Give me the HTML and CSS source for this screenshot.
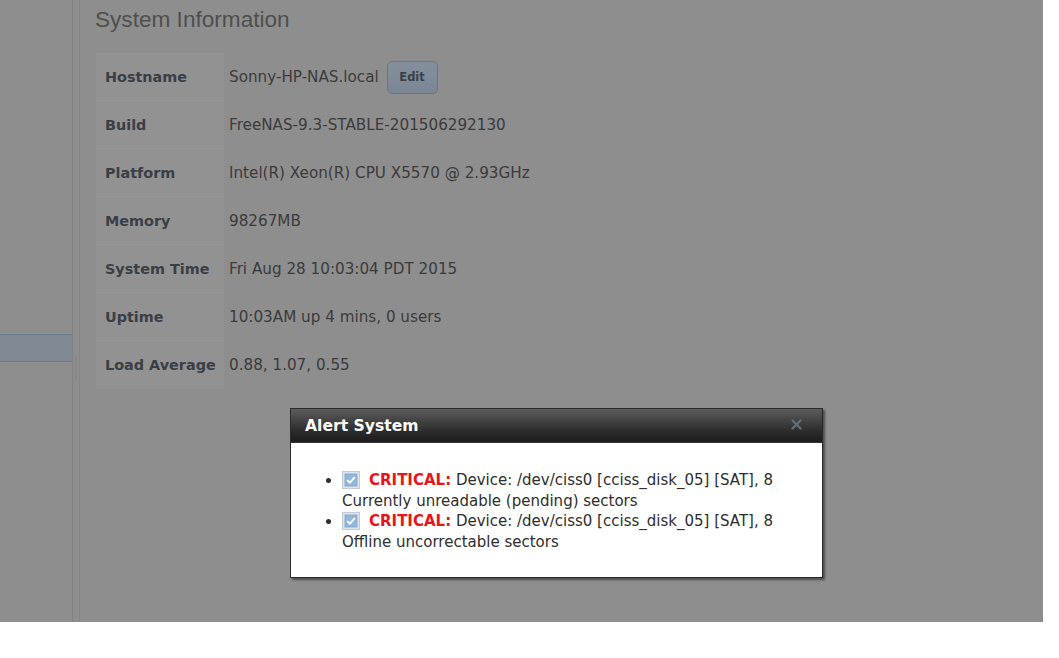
FILE: index.html
```html
<!DOCTYPE html>
<html>
<head>
<meta charset="utf-8">
<title>FreeNAS - System Information</title>
<link rel="stylesheet" href="styles.css">
</head>
<body>
<div class="screen">
  <aside class="sidebar">
    <div class="nav-selected"></div>
  </aside>
  <div class="splitter"><div class="grip"></div></div>
  <main class="main">
    <h1 class="title">System Information</h1>
    <table class="info">
      <tr><th>Hostname</th><td>Sonny-HP-NAS.local <button class="edit">Edit</button></td></tr>
      <tr><th>Build</th><td>FreeNAS-9.3-STABLE-201506292130</td></tr>
      <tr><th>Platform</th><td>Intel(R) Xeon(R) CPU X5570 @ 2.93GHz</td></tr>
      <tr><th>Memory</th><td>98267MB</td></tr>
      <tr><th>System Time</th><td>Fri Aug 28 10:03:04 PDT 2015</td></tr>
      <tr><th>Uptime</th><td>10:03AM up 4 mins, 0 users</td></tr>
      <tr><th>Load Average</th><td>0.88, 1.07, 0.55</td></tr>
    </table>
  </main>
  <div class="dialog">
    <div class="dialog-title">
      <span>Alert System</span>
      <svg class="close" width="11" height="11" viewBox="0 0 11 11"><path d="M1.5 1.5 L9.5 9.5 M9.5 1.5 L1.5 9.5" stroke="#5f6e7d" stroke-width="2.4" stroke-linecap="round"/></svg>
    </div>
    <div class="dialog-body">
      <ul class="alerts">
        <li><svg class="chk" width="18" height="18" viewBox="0 0 18 18"><rect x="0.5" y="0.5" width="17" height="17" fill="#dfe4ea" stroke="#c3ccd6"/><rect x="3" y="3" width="12" height="12" fill="#93b7dc" stroke="#7fa2c8" stroke-width="0.8"/><path d="M5.2 9.2 L7.8 11.8 L12.8 6.2" fill="none" stroke="#ffffff" stroke-width="1.8"/></svg><b class="crit">CRITICAL:</b> Device: /dev/ciss0 [cciss_disk_05] [SAT], 8 Currently unreadable (pending) sectors</li>
        <li><svg class="chk" width="18" height="18" viewBox="0 0 18 18"><rect x="0.5" y="0.5" width="17" height="17" fill="#dfe4ea" stroke="#c3ccd6"/><rect x="3" y="3" width="12" height="12" fill="#93b7dc" stroke="#7fa2c8" stroke-width="0.8"/><path d="M5.2 9.2 L7.8 11.8 L12.8 6.2" fill="none" stroke="#ffffff" stroke-width="1.8"/></svg><b class="crit">CRITICAL:</b> Device: /dev/ciss0 [cciss_disk_05] [SAT], 8 Offline uncorrectable sectors</li>
      </ul>
    </div>
  </div>
</div>
</body>
</html>
```

FILE: styles.css
```css
html, body {
  margin: 0;
  padding: 0;
  background: #ffffff;
}

.screen {
  position: relative;
  width: 1043px;
  height: 622px;
  background: #8e8e8e;
  display: flex;
  overflow: hidden;
  font-family: "DejaVu Sans", Verdana, sans-serif;
}

.sidebar {
  width: 72px;
  flex: none;
  border-right: 1px solid #838383;
}

.nav-selected {
  margin-top: 334px;
  height: 26px;
  background: #7f8993;
  border-top: 1px solid #6c7d8d;
  border-bottom: 1px solid #6c7d8d;
}

.splitter {
  width: 6px;
  flex: none;
  border-right: 1px solid #858585;
  display: flex;
  justify-content: center;
}

.grip {
  margin-top: 356px;
  width: 2px;
  height: 24px;
  background: #878787;
}

.main {
  flex: 1;
  padding-left: 15px;
}

.title {
  margin: 9px 0 0;
  font-family: "Liberation Sans", Arial, sans-serif;
  font-size: 22.6px;
  line-height: 22px;
  font-weight: normal;
  color: #4f4f4f;
}

.info {
  margin-top: 22px;
  margin-left: 1px;
  border-collapse: separate;
  border-spacing: 0;
}

.info th {
  width: 119px;
  height: 47px;
  padding: 0 0 0 9px;
  text-align: left;
  font-size: 14.4px;
  font-weight: bold;
  color: #3a3f47;
  background: #929292;
  border-bottom: 1px solid #979797;
  white-space: nowrap;
}

.info tr:last-child th {
  border-bottom-color: #929292;
}

.info td {
  padding: 0 0 0 5px;
  font-size: 15.2px;
  color: #3b3b3b;
  white-space: nowrap;
}

.edit {
  margin-left: 3px;
  width: 51px;
  height: 33px;
  vertical-align: middle;
  border: 1px solid #667789;
  border-radius: 5px;
  background: linear-gradient(#84909c, #7a8693);
  font-family: "DejaVu Sans", Verdana, sans-serif;
  font-size: 11.5px;
  font-weight: bold;
  color: #3a3f47;
  padding: 0;
}

.dialog {
  position: absolute;
  left: 290px;
  top: 408px;
  width: 531px;
  border: 1px solid #2b2b2b;
  background: #ffffff;
  box-shadow: 2px 2px 2px rgba(0, 0, 0, 0.45);
}

.dialog-title {
  height: 33px;
  display: flex;
  align-items: center;
  justify-content: space-between;
  padding: 0 20px 0 14px;
  background: linear-gradient(#5c5c5c, #2a2a2a 70%, #1c1c1c);
  border-bottom: 1px solid #333;
  color: #ffffff;
  font-size: 15.6px;
  font-weight: bold;
}

.close {
  display: block;
  margin-top: -2px;
}

.dialog-body {
  padding: 27px 0 25px;
}

.alerts {
  margin: 0;
  padding-left: 51px;
  padding-right: 16px;
  font-size: 15px;
  line-height: 20.5px;
  color: #2e2e2e;
}

.chk {
  vertical-align: -4px;
  margin-right: 9px;
}

.crit {
  color: #e8141b;
}
```
